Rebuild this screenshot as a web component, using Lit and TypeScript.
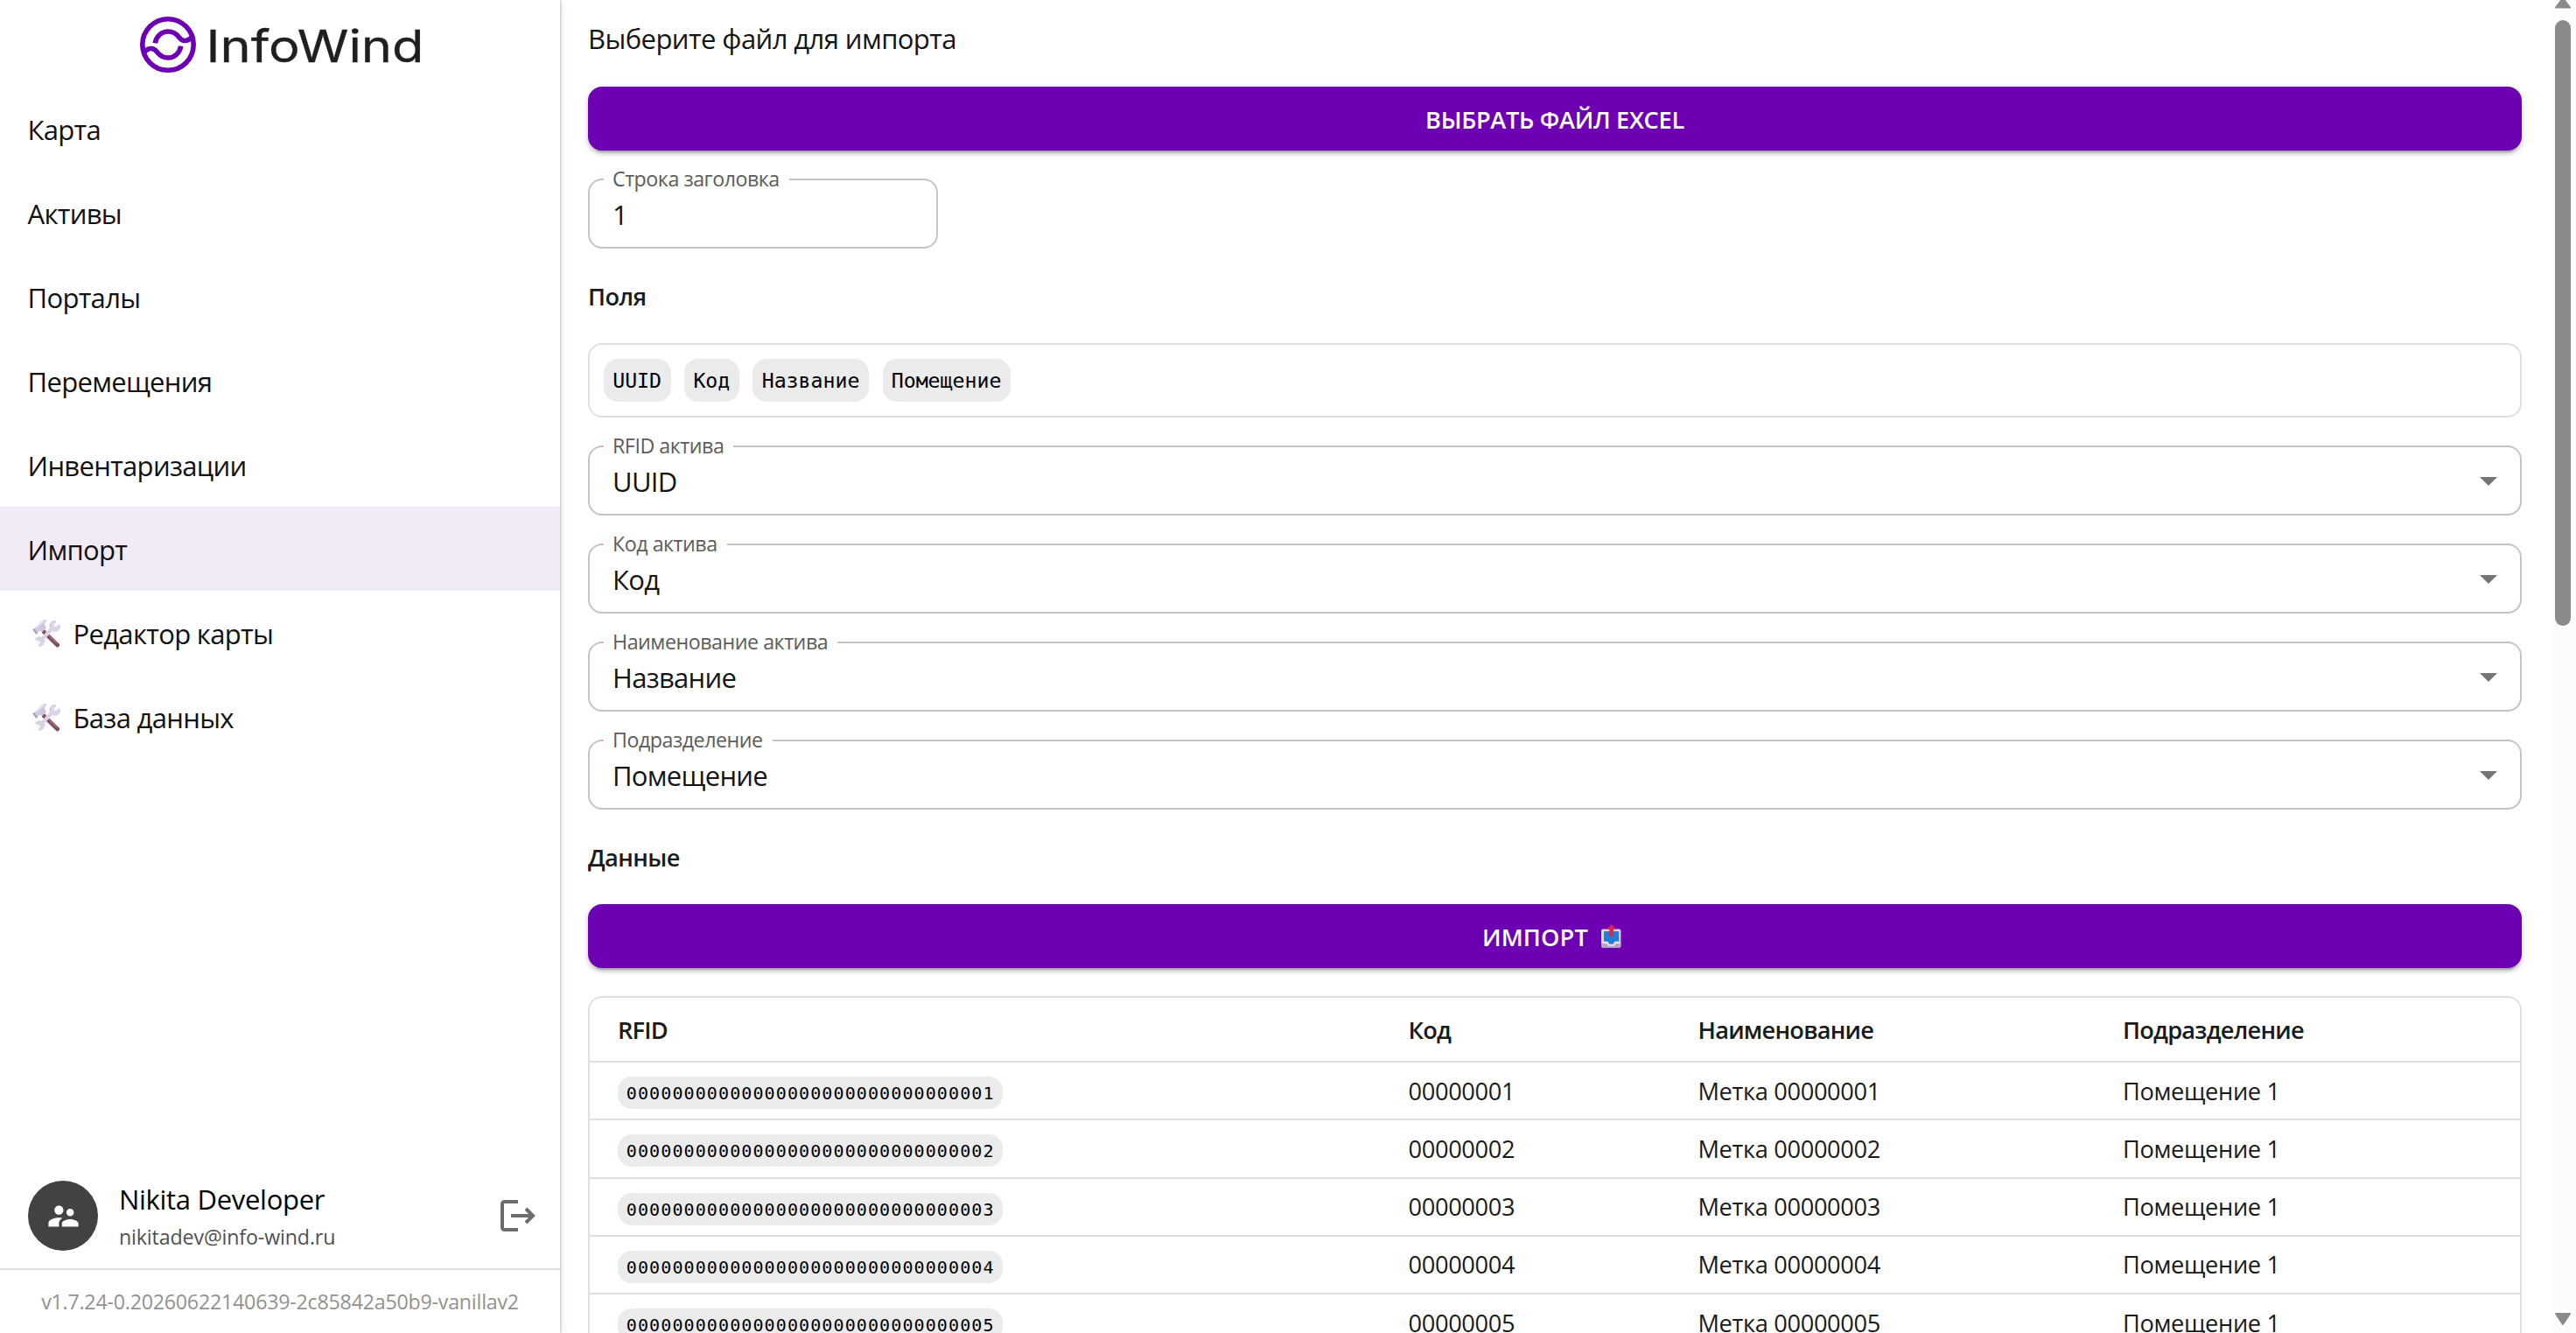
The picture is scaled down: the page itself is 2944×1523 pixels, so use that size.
import { LitElement, html, css, svg } from "lit";
import { customElement, property } from "lit/decorators.js";
import { classMap } from "lit/directives/class-map.js";

interface NavEntry {
  title: string;
  tools?: boolean;
  active?: boolean;
}

const NAV: NavEntry[] = [
  { title: "Карта" },
  { title: "Активы" },
  { title: "Порталы" },
  { title: "Перемещения" },
  { title: "Инвентаризации" },
  { title: "Импорт", active: true },
  { title: "Редактор карты", tools: true },
  { title: "База данных", tools: true },
];

const COLUMNS = ["UUID", "Код", "Название", "Помещение"];

const MAPPING = [
  { label: "RFID актива", value: "UUID" },
  { label: "Код актива", value: "Код" },
  { label: "Наименование актива", value: "Название" },
  { label: "Подразделение", value: "Помещение" },
];

const ROWS = [1, 2, 3, 4, 5].map((n) => ({
  rfid: String(n).padStart(32, "0"),
  code: String(n).padStart(8, "0"),
  name: `Метка ${String(n).padStart(8, "0")}`,
  place: "Помещение 1",
}));

const toolsIcon = html`
  <svg class="tools" viewBox="0 0 96 96" aria-hidden="true">
    <path d="M40 42 L86 87" stroke="#7d4a5e" stroke-width="14" stroke-linecap="round" />
    <path d="M44 42 L84 80" stroke="#9c7274" stroke-width="5" stroke-linecap="round" />
    <path d="M36 1 L50 1 L41 16 L48 28 L34 42 L24 38 L13 50 L2 36 L14 24 Z" fill="#cfc8dc" />
    <path d="M1 34 L5 30 L18 46 L13 51 Z" fill="#a9a0b8" />
    <path d="M36 1 L46 1 L20 27 L14 24 Z" fill="#e4dfee" />
    <path d="M30 71 L72 25" stroke="#dcd3e8" stroke-width="13" />
    <path d="M84 7 L74 16 L75 23 L82 23 L93 14 A18 18 0 1 1 84 7 Z" fill="#dcd5ea" />
    <path d="M9 66 L18 74 L26 72 L27 80 L18 91 A18 17 0 1 0 9 66 Z" fill="#d9d2e6" />
    <path d="M79 5 A17 17 0 0 0 61 27" stroke="#bdb5cc" stroke-width="3" fill="none" />
  </svg>
`;

const outboxIcon = html`
  <svg class="outbox" viewBox="0 0 23 28" aria-hidden="true">
    <rect x="0" y="5.4" width="22.4" height="21.4" rx="2" fill="#d9d3e3" />
    <path d="M0 21.5h22.4v3.4a2 2 0 0 1-2 2H2a2 2 0 0 1-2-2z" fill="#b3a6c6" />
    <path d="M3 9.4a1.4 1.4 0 0 1 1.4-1.4h14.4a1.4 1.4 0 0 1 1.4 1.4v10.2h-4.6l-2 2.6H9.2l-2-2.6H3z" fill="#1d7fd6" />
    <path d="M2 21.2h4.8l2 2.8h5.4l2-2.8h4.8" fill="none" stroke="#efeaf5" stroke-width="1.6" />
    <path d="M11.7 0l5.4 5.8h-3V14H9.3V5.8h-3z" fill="#dc2450" />
  </svg>
`;

@customElement("app-logo")
export class AppLogo extends LitElement {
  static styles = css`
    :host { display: block; }
    .logo { display: block; width: 330px; height: 72px; }
    .word { font-family: Inter, "Open Sans", sans-serif; font-size: 51px; font-weight: 400; fill: #1f1f1f; stroke: #1f1f1f; stroke-width: 0.3px; }
  `;

  render() {
    const wave = "M177.3 49.4C178.4 41.6 184.6 36 192 36C197.6 36 201.6 38.6 204.6 42.6C207 45.8 209.6 47 212.4 46.4C216.6 45.6 219 42.6 219.8 40.6";
    return html`
      <svg class="logo" viewBox="156 15 330 72" role="img" aria-label="InfoWind">
        <g fill="none" stroke="#6e00b4" stroke-width="5.6">
          <circle cx="192" cy="51" r="29.2" />
          ${svg`<path d=${wave} /><path d=${wave} transform="rotate(180 192 51)" />`}
        </g>
        <text class="word" x="235.5" y="71" textLength="249" lengthAdjust="spacingAndGlyphs">InfoWind</text>
      </svg>
    `;
  }
}

@customElement("outlined-field")
export class OutlinedField extends LitElement {
  @property() label = "";
  @property() value = "";
  @property({ type: Boolean }) select = false;

  static styles = css`
    :host { display: block; }
    .box {
      position: relative; box-sizing: border-box; height: 80px; padding: 2px 12px 0 26px;
      display: flex; align-items: center; justify-content: space-between;
      border: 2px solid #c4c4c4; border-radius: 16px;
    }
    .label {
      position: absolute; left: 16px; top: -14px; padding: 0 11px 0 10px; background: #fff;
      font-size: 23.2px; line-height: 24px; letter-spacing: -0.45px; color: #5c5c5c; white-space: nowrap;
    }
    .value { font-size: 31px; line-height: 46px; letter-spacing: -0.7px; color: #141414; }
    .arrow { width: 48px; height: 48px; fill: #757575; margin-top: -2px; }
  `;

  render() {
    return html`
      <div class="box">
        <span class="label">${this.label}</span>
        <span class="value">${this.value}</span>
        ${this.select ? html`<svg class="arrow" viewBox="0 0 24 24"><path d="M7 10l5 5 5-5z" /></svg>` : null}
      </div>
    `;
  }
}

@customElement("app-sidebar")
export class AppSidebar extends LitElement {
  static styles = css`
    :host {
      display: flex; flex-direction: column; width: 640px; height: 100%; background: #fff; z-index: 1;
      box-shadow: 1px 0 2px rgba(0, 0, 0, 0.2), 2px 0 10px rgba(0, 0, 0, 0.08);
    }
    .brand { height: 99px; display: flex; justify-content: center; box-sizing: border-box; padding: 15px 0 0 2px; }
    .nav { display: flex; flex-direction: column; flex: 1; }
    .item {
      height: 96px; box-sizing: border-box; padding: 2px 31.5px 0; display: flex; align-items: center;
      font-size: 31px; letter-spacing: -0.67px; color: #111;
    }
    .item.active { background: #f3eaf8; }
    .tools { width: 32px; height: 32px; margin: 0 14.5px 0 5.5px; fill: none; }
    .user { display: flex; align-items: center; padding: 0 24px 20px 32px; border-bottom: 2px solid #e0e0e0; }
    .avatar { width: 80px; height: 80px; border-radius: 50%; background: #424242; display: grid; place-items: center; }
    .avatar svg { width: 41px; height: 41px; fill: #fff; }
    .who { flex: 1; height: 80px; margin-left: 24px; }
    .name { font-size: 31px; line-height: 42px; letter-spacing: -0.3px; color: #000; }
    .mail { font-size: 23.2px; line-height: 34px; padding-top: 5px; letter-spacing: -0.13px; color: #505050; }
    .exit { width: 48px; height: 48px; fill: none; stroke: #6c6c6c; stroke-width: 4; }
    .version {
      height: 72px; line-height: 73px; text-align: center;
      font-size: 23.2px; letter-spacing: -0.21px; color: #929292;
    }
  `;

  render() {
    return html`
      <div class="brand"><app-logo></app-logo></div>
      <nav class="nav">
        ${NAV.map((n) => html`
          <div class=${classMap({ item: true, active: !!n.active })}>${n.tools ? toolsIcon : null}<span>${n.title}</span></div>
        `)}
      </nav>
      <div class="user">
        <div class="avatar">
          <svg viewBox="0 0 24 24"><path d="M16.5 12c1.38 0 2.49-1.12 2.49-2.5S17.88 7 16.5 7C15.12 7 14 8.12 14 9.5s1.12 2.5 2.5 2.5zM9 11c1.66 0 2.99-1.34 2.99-3S10.66 5 9 5C7.34 5 6 6.34 6 8s1.34 3 3 3zm7.5 3c-1.83 0-5.5.92-5.5 2.75V19h11v-2.25c0-1.83-3.67-2.75-5.5-2.75zM9 13c-2.33 0-7 1.17-7 3.5V19h7v-2.25c0-.85.33-2.34 2.37-3.47C10.5 13.1 9.66 13 9 13z" /></svg>
        </div>
        <div class="who">
          <div class="name">Nikita Developer</div>
          <div class="mail">nikitadev@info-wind.ru</div>
        </div>
        <svg class="exit" viewBox="0 0 48 48">
          <path d="M24 8H8.500a2.500 2.500 0 0 0-2.500 2.500V37.500a2.500 2.500 0 0 0 2.500 2.500H24" />
          <path d="M16 24H41" />
          <path d="M33 16l8 8-8 8" />
        </svg>
      </div>
      <div class="version">v1.7.24-0.20260622140639-2c85842a50b9-vanillav2</div>
    `;
  }
}

@customElement("import-page")
export class ImportPage extends LitElement {
  static styles = css`
    :host {
      display: flex; flex-direction: column; gap: 32px; flex: 1; min-width: 0; height: 100%;
      box-sizing: border-box; padding: 20px 32px 0; overflow: hidden;
    }
    :host > * { flex-shrink: 0; }
    .title { height: 47px; line-height: 49px; font-size: 31px; letter-spacing: -0.57px; color: #141414; }
    .button {
      height: 73px; box-sizing: border-box; padding-top: 2px; border-radius: 16px; background: #6e00b4; color: #fff;
      display: flex; align-items: center; justify-content: center;
      font-size: 27.2px; font-weight: 600; letter-spacing: -0.3px;
      box-shadow: 0 6px 2px -4px rgba(0, 0, 0, 0.2), 0 4px 4px rgba(0, 0, 0, 0.14), 0 2px 10px rgba(0, 0, 0, 0.12);
    }
    .button.import { letter-spacing: 0.15px; }
    .outbox { width: 23px; height: 28px; margin: -2px 7px 0 15px; }
    .header-row { width: 400px; }
    .heading { height: 44px; line-height: 46px; font-size: 27.2px; font-weight: 600; letter-spacing: -0.6px; color: #1a1a1a; }
    .chips {
      height: 85px; box-sizing: border-box; padding: 16px; display: flex; gap: 15.4px;
      border: 2px solid #e0e0e0; border-radius: 16px;
    }
    .mono { font-family: "DejaVu Sans Mono", monospace; background: #ebebeb; border-radius: 16px; color: #000; }
    .chip { height: 49px; line-height: 49px; padding: 0 10.8px 0 10.2px; font-size: 23.2px; }
    .mapping { display: flex; flex-direction: column; gap: 32px; }
    .table { border: 2px solid #e0e0e0; border-radius: 16px 16px 0 0; border-bottom: none; }
    .row {
      display: grid; grid-template-columns: 903.5px 331px 485.5px 1fr; height: 66.25px; box-sizing: border-box;
      border-bottom: 2px solid #e0e0e0; align-items: center; font-size: 27.2px; letter-spacing: -0.33px; color: #1a1a1a;
    }
    .row > span { padding-left: 32px; }
    .row.head { height: 74px; font-weight: 600; letter-spacing: -0.76px; }
    .row > .rfid { padding-top: 5px; display: flex; }
    .pill {
      height: 37px; box-sizing: border-box; padding: 2px 9.5px 0 9.8px; line-height: 35px;
      font-size: 20px; letter-spacing: 1.11px;
    }
  `;

  render() {
    return html`
      <div class="title">Выберите файл для импорта</div>
      <div class="button" role="button">ВЫБРАТЬ ФАЙЛ EXCEL</div>
      <outlined-field class="header-row" label="Строка заголовка" value="1"></outlined-field>
      <div class="heading">Поля</div>
      <div class="chips">${COLUMNS.map((c) => html`<span class="mono chip">${c}</span>`)}</div>
      <div class="mapping">
        ${MAPPING.map((m) => html`<outlined-field select label=${m.label} value=${m.value}></outlined-field>`)}
      </div>
      <div class="heading">Данные</div>
      <div class="button import" role="button"><span>ИМПОРТ</span>${outboxIcon}</div>
      <div class="table">
        <div class="row head"><span>RFID</span><span>Код</span><span>Наименование</span><span>Подразделение</span></div>
        ${ROWS.map((r) => html`
          <div class="row">
            <span class="rfid"><span class="mono pill">${r.rfid}</span></span>
            <span>${r.code}</span><span>${r.name}</span><span>${r.place}</span>
          </div>
        `)}
      </div>
    `;
  }
}

@customElement("app-root")
export class AppRoot extends LitElement {
  static styles = css`
    :host {
      display: flex; width: 100vw; height: 100vh; overflow: hidden; background: #fff;
      font-family: "Open Sans", "Noto Sans", sans-serif;
    }
    .scrollbar {
      width: 30px; height: 100%; background: #fcfcfc; display: flex; flex-direction: column; align-items: center;
      box-sizing: border-box; padding: 0 0 9px;
    }
    .arrow { width: 18px; display: block; fill: #8a8a8a; stroke: #8a8a8a; stroke-width: 2; stroke-linejoin: round; }
    .up { height: 10px; }
    .down { height: 14px; margin-top: auto; }
    .thumb { width: 18px; height: 692px; margin-top: 13px; border-radius: 9px; background: #8a8a8a; }
  `;

  render() {
    return html`
      <app-sidebar></app-sidebar>
      <import-page></import-page>
      <div class="scrollbar">
        <svg class="arrow up" viewBox="0 4 18 10"><path d="M9 2L17 12.600H1z" /></svg>
        <div class="thumb"></div>
        <svg class="arrow down" viewBox="0 0 18 14"><path d="M1 1h16L9 13z" /></svg>
      </div>
    `;
  }
}
